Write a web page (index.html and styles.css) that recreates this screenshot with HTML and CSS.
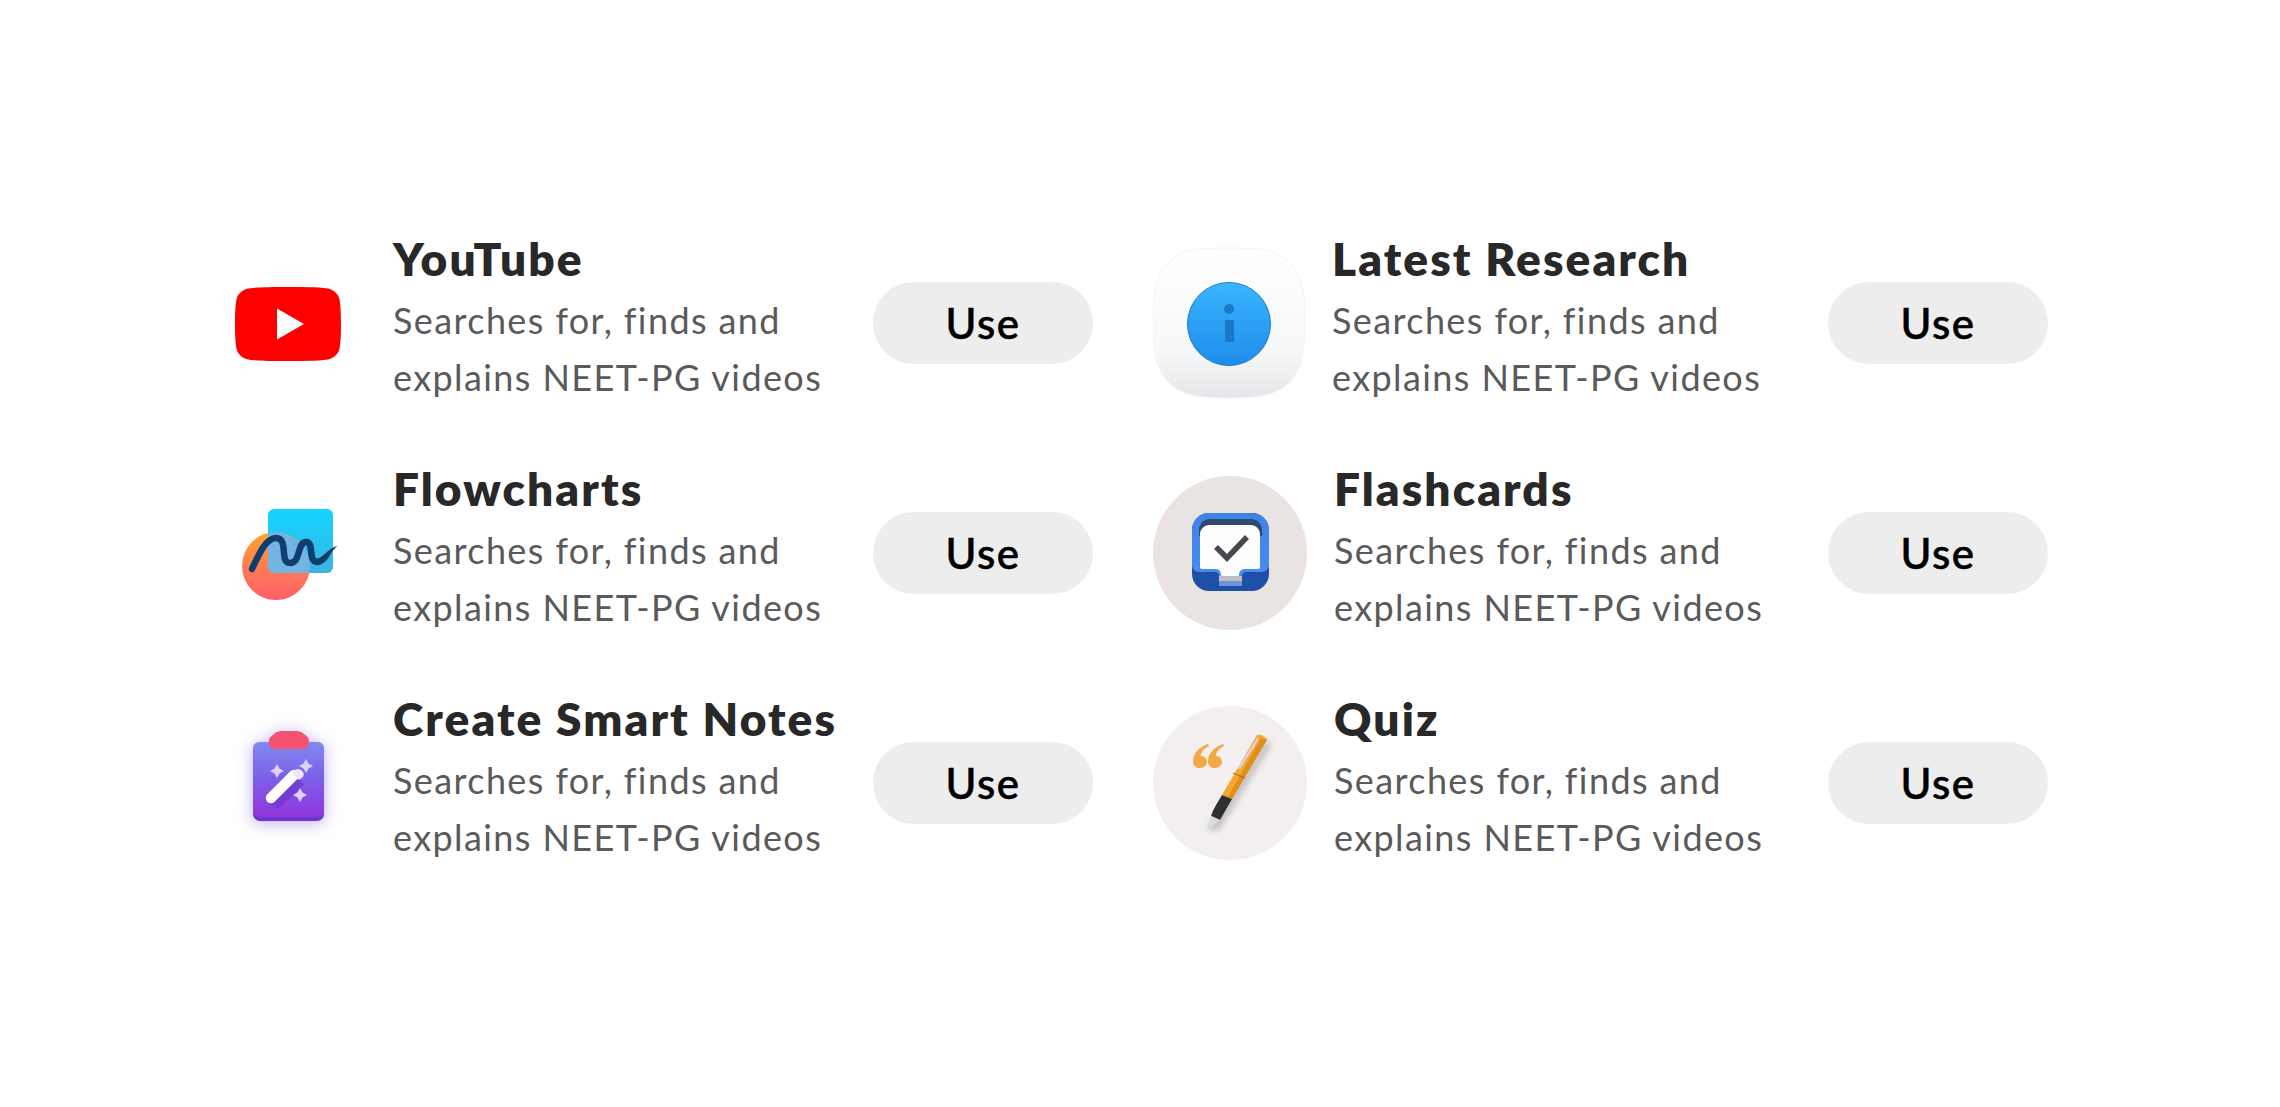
FILE: index.html
```html
<!DOCTYPE html>
<html lang="en">
<head>
    <meta charset="UTF-8">
    <meta name="viewport" content="width=device-width, initial-scale=1.0">
    <title>Tools</title>
    <link rel="stylesheet" href="styles.css">
</head>
<body>
    <div class="tool-grid">
        <!-- YouTube -->
        <div class="tool">
            <div class="tool-icon">
                <svg class="yt-icon" width="106" height="74" viewBox="0 0 106 74">
                    <path d="M53 0c20 0 36 .4 41 1.800c5 1.400 9 5 10.400 10C105.600 17 106 27 106 37s-.4 20-1.600 25.200c-1.400 5-5.400 8.600-10.400 10C89 73.600 73 74 53 74s-36-.4-41-1.800c-5-1.400-9-5-10.400-10C.4 57 0 47 0 37s.4-20 1.600-25.200c1.400-5 5.400-8.600 10.400-10C17 .4 33 0 53 0z" fill="#ff0000"/>
                    <path d="M42 21.500 69 37 42 52.500z" fill="#fff"/>
                </svg>
            </div>
            <div class="tool-text">
                <h3>YouTube</h3>
                <p>Searches for, finds and<br>explains NEET-PG videos</p>
            </div>
            <button class="use-btn">Use</button>
        </div>

        <!-- Latest Research -->
        <div class="tool tool-tile">
            <div class="tool-icon">
                <svg width="154" height="154" viewBox="0 0 154 154">
                    <defs>
                        <linearGradient id="tile" x1="0" y1="0" x2="0" y2="1">
                            <stop offset="0" stop-color="#ffffff"/>
                            <stop offset=".7" stop-color="#f6f7f8"/>
                            <stop offset="1" stop-color="#e4e6e9"/>
                        </linearGradient>
                        <linearGradient id="info" x1="0" y1="0" x2="0" y2="1">
                            <stop offset="0" stop-color="#38b6fd"/>
                            <stop offset="1" stop-color="#1e8cec"/>
                        </linearGradient>
                    </defs>
                    <path d="M76 2c30 0 46 1 59 13c13 13 17 28 17 60s-3 48-16 62c-13 12-30 15-60 15s-47-3-60-15C3 123 0 107 0 75s4-47 17-60C30 3 46 2 76 2z" fill="url(#tile)" stroke="#f3f4f5" stroke-width="1"/>
                    <circle cx="76" cy="78" r="41.500" fill="url(#info)" stroke="#1a78d2" stroke-width="1"/>
                    <circle cx="76" cy="63" r="5" fill="#1a78c9"/>
                    <rect x="72" y="74" width="9" height="22" fill="#1a78c9"/>
                </svg>
            </div>
            <div class="tool-text">
                <h3>Latest Research</h3>
                <p>Searches for, finds and<br>explains NEET-PG videos</p>
            </div>
            <button class="use-btn">Use</button>
        </div>

        <!-- Flowcharts -->
        <div class="tool">
            <div class="tool-icon">
                <svg width="154" height="154" viewBox="0 0 154 154">
                    <defs>
                        <linearGradient id="orange" x1="0" y1="0" x2="0" y2="1">
                            <stop offset="0" stop-color="#ffa329"/>
                            <stop offset=".55" stop-color="#ff7a55"/>
                            <stop offset="1" stop-color="#ff6068"/>
                        </linearGradient>
                        <linearGradient id="cyan" x1="0" y1="0" x2="0" y2="1">
                            <stop offset="0" stop-color="#12d6ff"/>
                            <stop offset="1" stop-color="#3eb1e0"/>
                        </linearGradient>
                        <clipPath id="ball"><circle cx="65" cy="90" r="34"/></clipPath>
                    </defs>
                    <circle cx="65" cy="90" r="34" fill="url(#orange)"/>
                    <rect x="57" y="33" width="65" height="64" rx="6" fill="url(#cyan)"/>
                    <rect x="57" y="33" width="65" height="64" rx="6" fill="#74b4e2" clip-path="url(#ball)"/>
                    <path d="M41 93C48 78 55 62 65 62C78 62 68 87 79 87C90 87 86 66 95 66C104 66 96 87 107 86" fill="none" stroke="#0f3e6e" stroke-width="6.500" stroke-linecap="round"/>
                    <path d="M105 83C113 82 116 72 127 70C119 74 118 88 107 89z" fill="#0f3e6e"/>
                </svg>
            </div>
            <div class="tool-text">
                <h3>Flowcharts</h3>
                <p>Searches for, finds and<br>explains NEET-PG videos</p>
            </div>
            <button class="use-btn">Use</button>
        </div>

        <!-- Flashcards -->
        <div class="tool">
            <div class="tool-icon">
                <span class="icon-circle circle-rose">
                    <svg width="154" height="154" viewBox="0 0 154 154">
                        <defs>
                            <linearGradient id="tray" x1="0" y1="0" x2="0" y2="1">
                                <stop offset="0" stop-color="#3f83e8"/>
                                <stop offset="1" stop-color="#4a8cf0"/>
                            </linearGradient>
                        </defs>
                        <rect x="39" y="37" width="77" height="78" rx="17" fill="#1f50a8"/>
                        <path d="M56 37h43a17 17 0 0 1 17 17v36a8 8 0 0 1-7 6H93a4 4 0 0 0-4 4v2H66v-2a4 4 0 0 0-4-4H46a8 8 0 0 1-7-6V54a17 17 0 0 1 17-17z" fill="url(#tray)"/>
                        <path d="M57 43h41a11 11 0 0 1 11 11v6H46v-6a11 11 0 0 1 11-11z" fill="#2f4a6e"/>
                        <path d="M47 58a9 9 0 0 1 9-9h42a9 9 0 0 1 9 9v33a2 2 0 0 1-2 2H92a6 6 0 0 0-6 5v2H68v-2a6 6 0 0 0-6-5H49a2 2 0 0 1-2-2z" fill="#fdfdfe"/>
                        <rect x="66" y="100" width="23" height="5" fill="#bcbfc4"/>
                        <rect x="66" y="105" width="23" height="5" fill="#6c94d8"/>
                        <path d="M63 71l11 11l20-21" fill="none" stroke="#46484e" stroke-width="5.500"/>
                    </svg>
                </span>
            </div>
            <div class="tool-text">
                <h3>Flashcards</h3>
                <p>Searches for, finds and<br>explains NEET-PG videos</p>
            </div>
            <button class="use-btn">Use</button>
        </div>

        <!-- Create Smart Notes -->
        <div class="tool">
            <div class="tool-icon">
                <svg class="notes-icon" width="154" height="154" viewBox="0 0 154 154">
                    <defs>
                        <linearGradient id="board" x1="0" y1="0" x2="0" y2="1">
                            <stop offset="0" stop-color="#7f8af0"/>
                            <stop offset=".45" stop-color="#7c62ea"/>
                            <stop offset="1" stop-color="#9135dc"/>
                        </linearGradient>
                    </defs>
                    <rect x="42" y="37" width="71" height="78" rx="7" fill="#6d35d0"/>
                    <rect x="42" y="36" width="71" height="75" rx="6" fill="url(#board)"/>
                    <path d="M63 28c3-3 6-3 9-3h12c3 0 6 0 9 3c3 3 5 3 5 7c0 6-3 8-6 8H64c-3 0-6-2-6-8c0-4 2-4 5-7z" fill="#f55272"/>
                    <path d="M59 98l28-27l6 8l-26 24z" fill="#6a2fc8" opacity=".6"/>
                    <path d="M60 92L83 69" stroke="#fff" stroke-width="10.500" stroke-linecap="round"/>
                    <path d="M84 64a5.500 5.500 0 0 1 8 7l-4 3l-7-7z" fill="#f0e4ff"/>
                    <g fill="#ddd0fb">
                        <path d="M66 58l2.500 4.500l4.500 2.500l-4.500 2.500L66 72l-2.500-4.500L59 65l4.500-2.500z"/>
                        <path d="M95 53l2.500 4.500l4.500 2.500l-4.500 2.500L95 67l-2.500-4.500L88 60l4.500-2.500z"/>
                        <path d="M89 82l2.500 4.500l4.500 2.500l-4.500 2.500L89 96l-2.500-4.500L82 89l4.500-2.500z"/>
                    </g>
                </svg>
            </div>
            <div class="tool-text">
                <h3>Create Smart Notes</h3>
                <p>Searches for, finds and<br>explains NEET-PG videos</p>
            </div>
            <button class="use-btn">Use</button>
        </div>

        <!-- Quiz -->
        <div class="tool">
            <div class="tool-icon">
                <span class="icon-circle circle-grey">
                    <svg width="154" height="154" viewBox="0 0 154 154">
                        <defs>
                            <filter id="pen-shadow" x="-30%" y="-30%" width="160%" height="160%">
                                <feGaussianBlur stdDeviation="3"/>
                            </filter>
                        </defs>
                        <g fill="#f2a844">
                            <path d="M55 38C46 41 40 48 40 55C40 60 43 62 47 62C51 62 54 59 54 56C54 52 51 50 48 50C48 46 50 43 56 40z"/>
                            <path d="M70 38C61 41 55 48 55 55C55 60 58 62 62 62C66 62 69 59 69 56C69 52 66 50 63 50C63 46 65 43 71 40z"/>
                        </g>
                        <path d="M114 33L118 39L66 124L54 124z" fill="#000" opacity=".2" filter="url(#pen-shadow)"/>
                        <path d="M104 29L109 29L114 33L79 93L69 89z" fill="#f5a832"/>
                        <path d="M108 32L114 34L79 93L75 91z" fill="#e08e1c"/>
                        <path d="M104 32L106 33L87 63L85 62z" fill="#d9d4f0"/>
                        <path d="M80 67L92 72" stroke="#a8650f" stroke-width="1"/>
                        <path d="M69 89L79 93L67 114L58 110C60 103 65 96 69 89z" fill="#2f3032"/>
                        <path d="M58 110L67 114L54 124z" fill="#d8dbe2"/>
                    </svg>
                </span>
            </div>
            <div class="tool-text">
                <h3>Quiz</h3>
                <p>Searches for, finds and<br>explains NEET-PG videos</p>
            </div>
            <button class="use-btn">Use</button>
        </div>
    </div>
</body>
</html>
```

FILE: styles.css
```css
body {
    margin: 0;
    background: #fff;
    font-family: "Lato", "Open Sans", sans-serif;
}

.tool-grid {
    display: grid;
    grid-template-columns: 882px 895px;
    column-gap: 60px;
    row-gap: 76px;
    padding: 246px 0 0 211px;
}

.tool {
    display: flex;
    align-items: center;
    height: 154px;
}

.tool-icon {
    flex: none;
    width: 154px;
    height: 154px;
    margin-right: 28px;
    display: flex;
    align-items: center;
    justify-content: center;
}

.tool:nth-child(even) .tool-icon {
    margin-right: 27px;
}

.tool.tool-tile .tool-icon {
    margin-right: 25px;
}

.yt-icon {
    margin-top: 1px;
}

.icon-circle {
    display: block;
    width: 154px;
    height: 154px;
    border-radius: 50%;
}

.circle-rose {
    background: #e9e3e2;
}

.circle-grey {
    background: #f2efee;
}

.notes-icon {
    filter: drop-shadow(0 2px 8px rgba(124, 92, 240, 0.5));
}

.tool-text {
    flex: 1;
    padding-bottom: 9px;
}

.tool-text h3 {
    margin: 0 0 5px;
    font-size: 46px;
    font-weight: 800;
    letter-spacing: 2.1px;
    line-height: 56px;
    color: #282828;
}

.tool-text p {
    margin: 0;
    font-size: 36px;
    letter-spacing: 1.4px;
    line-height: 57px;
    color: #5a5a5a;
}

.use-btn {
    flex: none;
    width: 220px;
    height: 82px;
    border: none;
    border-radius: 41px;
    background: #ededed;
    font-family: inherit;
    font-size: 42px;
    font-weight: 500;
    letter-spacing: 1.5px;
    -webkit-text-stroke: 0.6px #000;
    color: #000;
}
```
